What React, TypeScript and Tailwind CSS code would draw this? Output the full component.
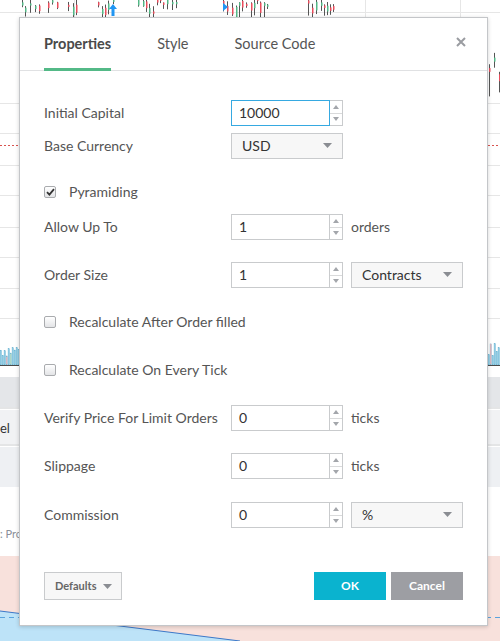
import React from "react";

const FONT = { fontFamily: "Lato, 'Open Sans', 'DejaVu Sans', sans-serif" };

function rng(seed: number) {
  let s = seed;
  return () => {
    s = (s * 9301 + 49297) % 233280;
    return s / 233280;
  };
}

function Candles({ ranges, yMin, yMax, seed }: { ranges: [number, number][]; yMin: number; yMax: number; seed: number }) {
  const r = rng(seed);
  const items: React.ReactNode[] = [];
  ranges.forEach(([a, b], ri) => {
    for (let x = a; x <= b; x += 3 + Math.floor(r() * 3)) {
      const top = yMin + r() * (yMax - yMin) * 0.5;
      const bot = top + 5 + r() * (yMax - yMin) * 0.6;
      const bTop = top + r() * (bot - top) * 0.4;
      const bBot = bTop + 2 + r() * (bot - bTop) * 0.6;
      const up = r() > 0.5;
      items.push(
        <g key={`${ri}-${x}`}>
          <line x1={x + 0.5} x2={x + 0.5} y1={top} y2={bot} stroke="#555" strokeWidth={1} />
          <rect x={x} y={bTop} width={1.5} height={bBot - bTop} fill={up ? "#53b987" : "#eb4d5c"} />
        </g>
      );
    }
  });
  return <g>{items}</g>;
}

function ChartBackground() {
  const hLines = [103, 133, 165, 195, 227, 257, 288, 318];
  const r = rng(7);
  const vol: React.ReactNode[] = [];
  const addVol = (a: number, b: number) => {
    for (let x = a; x < b; x += 2) {
      const h = 8 + r() * 14;
      const c = r();
      vol.push(
        <rect key={`v${x}`} x={x} y={365 - h} width={1.6} height={h} fill={c > 0.85 ? "#e9b7bd" : c > 0.7 ? "#b8dcc4" : "#8fcbe2"} stroke="#6fb5d3" strokeWidth={0.3} />
      );
    }
  };
  addVol(0, 20);
  addVol(488, 500);
  return (
    <svg className="absolute inset-0" width={500} height={641} viewBox="0 0 500 641">
      <rect x={0} y={0} width={500} height={641} fill="#ffffff" />
      <line x1={0} x2={500} y1={12.5} y2={12.5} stroke="#e6e6e6" />
      <line x1={74.5} x2={74.5} y1={0} y2={17} stroke="#e6e6e6" />
      <line x1={365.5} x2={365.5} y1={0} y2={17} stroke="#e6e6e6" />
      <line x1={460.5} x2={460.5} y1={0} y2={17} stroke="#e6e6e6" />
      {hLines.map((y) => (
        <line key={y} x1={0} x2={500} y1={y + 0.5} y2={y + 0.5} stroke="#e6e6e6" />
      ))}
      <line x1={0} x2={500} y1={145.5} y2={145.5} stroke="#d9534f" strokeDasharray="2 2" />
      <Candles ranges={[[22, 40], [48, 60], [68, 77], [98, 115], [138, 177], [223, 268], [308, 335]]} yMin={-4} yMax={17} seed={3} />
      <Candles ranges={[[489, 500]]} yMin={48} yMax={98} seed={11} />
      <path d="M113 4 L109 9 L111.5 9 L111.5 16 L114.5 16 L114.5 9 L117 9 Z" fill="#2196f3" />
      <path d="M223 3 L228 7 L223 11 Z" fill="#2196f3" />
      {vol}
      <line x1={0} x2={500} y1={365.5} y2={365.5} stroke="#4a4a4a" />
      <rect x={0} y={377} width={500} height={30} fill="#e4e6e9" />
      <line x1={0} x2={500} y1={408} y2={408} stroke="#c9cbcd" />
      <rect x={0} y={410} width={500} height={34} fill="#f1f2f4" />
      <line x1={0} x2={500} y1={445} y2={445} stroke="#c9cbcd" />
      <rect x={0} y={447} width={500} height={40} fill="#eef0f3" />
      <text x={0} y={433} fontSize={13} fill="#333" style={FONT}>el</text>
      <text x={-4} y={538} fontSize={11} fill="#8a8f99" style={FONT}>t: Pro</text>
      <rect x={0} y={556} width={500} height={85} fill="#f8e1dc" />
      <path d="M0 611 L240 641 L0 641 Z" fill="#bde3f8" />
      <line x1={0} x2={240} y1={611} y2={641} stroke="#3c78c8" />
      <line x1={0} x2={500} y1={617.5} y2={617.5} stroke="#5ba3dd" strokeDasharray="5 4" />
    </svg>
  );
}

function Spinner() {
  return (
    <div className="flex flex-col w-[13px] h-full border border-l-0 border-[#c9cbcd] bg-white">
      <div className="flex-1 flex items-center justify-center border-b border-[#d9dadb]">
        <svg width="6" height="4" viewBox="0 0 6 4"><path d="M0 4 L3 0 L6 4 Z" fill="#a3a6ab" /></svg>
      </div>
      <div className="flex-1 flex items-center justify-center">
        <svg width="6" height="4" viewBox="0 0 6 4"><path d="M0 0 L3 4 L6 0 Z" fill="#a3a6ab" /></svg>
      </div>
    </div>
  );
}

function NumInput({ value, focused }: { value: string; focused?: boolean }) {
  return (
    <div className="flex h-[26px] w-[112px]">
      <div
        className={
          focused
            ? "w-[99px] h-full border border-[#36a9e1] flex items-center pl-[7px] pb-[1px] text-[14px] text-[#333]"
            : "w-[99px] h-full border border-[#c9cbcd] flex items-center pl-[7px] pb-[1px] text-[14px] text-[#333]"
        }
      >
        {value}
      </div>
      <Spinner />
    </div>
  );
}

function Caret() {
  return (
    <svg width="9" height="5" viewBox="0 0 9 5"><path d="M0 0 L9 0 L4.5 5 Z" fill="#8a8d92" /></svg>
  );
}

function Select({ value }: { value: string }) {
  return (
    <div className="flex h-[26px] w-[112px] items-center justify-between border border-[#c9cbcd] bg-[#f7f7f7] pl-[10px] pr-[10px] pb-[1px] text-[14px] text-[#333]">
      <span>{value}</span>
      <Caret />
    </div>
  );
}

function CheckBox({ checked }: { checked?: boolean }) {
  return (
    <div className="w-[12px] h-[12px] rounded-[2px] border border-[#a9abae] bg-gradient-to-b from-[#ffffff] to-[#e3e4e6] flex items-center justify-center">
      {checked && (
        <svg width="9" height="8" viewBox="0 0 9 8">
          <path d="M1 4.2 L3.4 6.6 L8 1.2" stroke="#333" strokeWidth="1.8" fill="none" />
        </svg>
      )}
    </div>
  );
}

function Row({ label, children, mt }: { label: string; children?: React.ReactNode; mt: string }) {
  return (
    <div className={`flex items-center h-[26px] ${mt}`}>
      <div className="w-[187px] text-[14px] text-[#555] whitespace-nowrap pb-[2px]">{label}</div>
      <div className="flex items-center gap-[8px]">{children}</div>
    </div>
  );
}

function CheckRow({ label, checked, mt }: { label: string; checked?: boolean; mt: string }) {
  return (
    <div className={`flex items-center h-[26px] gap-[13px] ${mt}`}>
      <CheckBox checked={checked} />
      <span className="text-[14px] text-[#555] pb-[2px]">{label}</span>
    </div>
  );
}

export default function App() {
  return (
    <div className="relative w-[500px] h-[641px] overflow-hidden bg-white" style={FONT}>
      <ChartBackground />
      <div className="absolute left-[19px] top-[17px] w-[469px] bg-white border border-[#c4c6c9] shadow-[0_1px_4px_rgba(0,0,0,0.18)] flex flex-col">
        <div className="relative flex h-[53px] border-b border-[#e0e1e3] px-[24px] gap-[46px]">
          <div className="relative flex items-center h-full text-[14.5px] font-bold text-[#4a4a4a]">
            Properties
            <div className="absolute left-0 right-0 bottom-[-1px] h-[3px] bg-[#53b987]" />
          </div>
          <div className="flex items-center h-full text-[14.5px] text-[#555]">Style</div>
          <div className="flex items-center h-full text-[14.5px] text-[#555]">Source Code</div>
          <div className="absolute right-[21px] top-[19px]">
            <svg width="10" height="10" viewBox="0 0 10 10">
              <path d="M1 1 L9 9 M9 1 L1 9" stroke="#9a9ca1" strokeWidth="2" />
            </svg>
          </div>
        </div>
        <div className="flex flex-col px-[24px] pt-[29px]">
          <Row label="Initial Capital" mt="mt-0">
            <NumInput value="10000" focused />
          </Row>
          <Row label="Base Currency" mt="mt-[7px]">
            <Select value="USD" />
          </Row>
          <CheckRow label="Pyramiding" checked mt="mt-[20px]" />
          <Row label="Allow Up To" mt="mt-[9px]">
            <NumInput value="1" />
            <span className="text-[14px] text-[#555] pb-[2px]">orders</span>
          </Row>
          <Row label="Order Size" mt="mt-[22px]">
            <NumInput value="1" />
            <Select value="Contracts" />
          </Row>
          <CheckRow label="Recalculate After Order filled" mt="mt-[21px]" />
          <CheckRow label="Recalculate On Every Tick" mt="mt-[22px]" />
          <Row label="Verify Price For Limit Orders" mt="mt-[22px]">
            <NumInput value="0" />
            <span className="text-[14px] text-[#555] pb-[2px]">ticks</span>
          </Row>
          <Row label="Slippage" mt="mt-[22px]">
            <NumInput value="0" />
            <span className="text-[14px] text-[#555] pb-[2px]">ticks</span>
          </Row>
          <Row label="Commission" mt="mt-[23px]">
            <NumInput value="0" />
            <Select value="%" />
          </Row>
        </div>
        <div className="flex items-center justify-between px-[24px] mt-[44px] pb-[25px]">
          <div className="flex items-center gap-[7px] h-[28px] pl-[10px] pr-[9px] border border-[#c9cbcd] bg-[#f7f7f7] text-[11px] font-bold text-[#666]">
            Defaults
            <Caret />
          </div>
          <div className="flex gap-[5px]">
            <div className="w-[72px] h-[28px] flex items-center justify-center bg-[#0ab3cf] text-white text-[12px] font-bold">OK</div>
            <div className="w-[72px] h-[28px] flex items-center justify-center bg-[#9d9ea3] text-white text-[12px] font-bold">Cancel</div>
          </div>
        </div>
      </div>
    </div>
  );
}
